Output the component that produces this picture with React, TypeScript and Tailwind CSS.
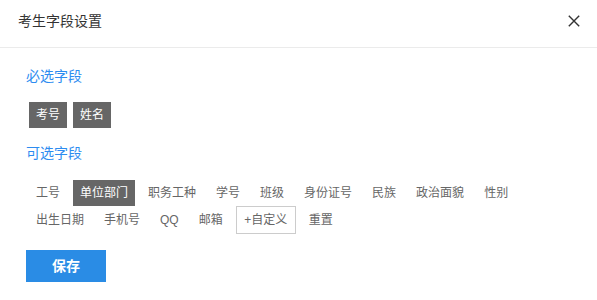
import React from "react";

const font = { fontFamily: '"Liberation Sans", "Noto Sans CJK SC", sans-serif' };

const optional = [
  { t: "工号" },
  { t: "单位部门", active: true },
  { t: "职务工种" },
  { t: "学号" },
  { t: "班级" },
  { t: "身份证号" },
  { t: "民族" },
  { t: "政治面貌" },
  { t: "性别" },
  { t: "出生日期" },
  { t: "手机号" },
  { t: "QQ" },
  { t: "邮箱" },
  { t: "+自定义", custom: true },
  { t: "重置" },
];

export default function App() {
  return (
    <div className="w-[597px] h-[300px] bg-white overflow-hidden" style={font}>
      <div className="h-[48px] border-b border-[#ebebeb] flex items-start justify-between pl-[18px] pr-[17px]">
        <div className="pt-[11px] text-[14px] leading-[20px] text-[#333]">考生字段设置</div>
        <svg className="mt-[15px]" width="12" height="12" viewBox="0 0 12 12">
          <path d="M0.8 0.8 L11.2 11.2 M11.2 0.8 L0.8 11.2" stroke="#333" strokeWidth="1.4" fill="none" />
        </svg>
      </div>
      <div className="pl-[26px]">
        <div className="mt-[18px] text-[14px] leading-[20px] text-[#2d8cf0]">必选字段</div>
        <div className="mt-[16px] ml-[3px] flex gap-[6px]">
          {["考号", "姓名"].map((t) => (
            <div key={t} className="h-[26px] px-[7px] bg-[#666] text-white text-[12px] leading-[26px]">
              {t}
            </div>
          ))}
        </div>
        <div className="mt-[15px] text-[14px] leading-[20px] text-[#2d8cf0]">可选字段</div>
        <div className="mt-[17px] ml-[3px] flex flex-wrap items-center gap-x-[6px] w-[500px]">
          {optional.map((o) =>
            o.custom ? (
              <div key={o.t} className="h-[28px] w-[60px] text-center border border-[#ccc] text-[#666] text-[12px] leading-[26px]">
                {o.t}
              </div>
            ) : (
              <div
                key={o.t}
                className={
                  o.active
                    ? "h-[26px] px-[7px] bg-[#666] text-white text-[12px] leading-[26px]"
                    : "h-[26px] px-[7px] text-[#666] text-[12px] leading-[26px]"
                }
              >
                {o.t}
              </div>
            )
          )}
        </div>
        <button className="mt-[16px] w-[80px] h-[32px] bg-[#2a8ce5] text-white text-[14px] font-bold leading-[32px] text-center">
          保存
        </button>
      </div>
    </div>
  );
}
